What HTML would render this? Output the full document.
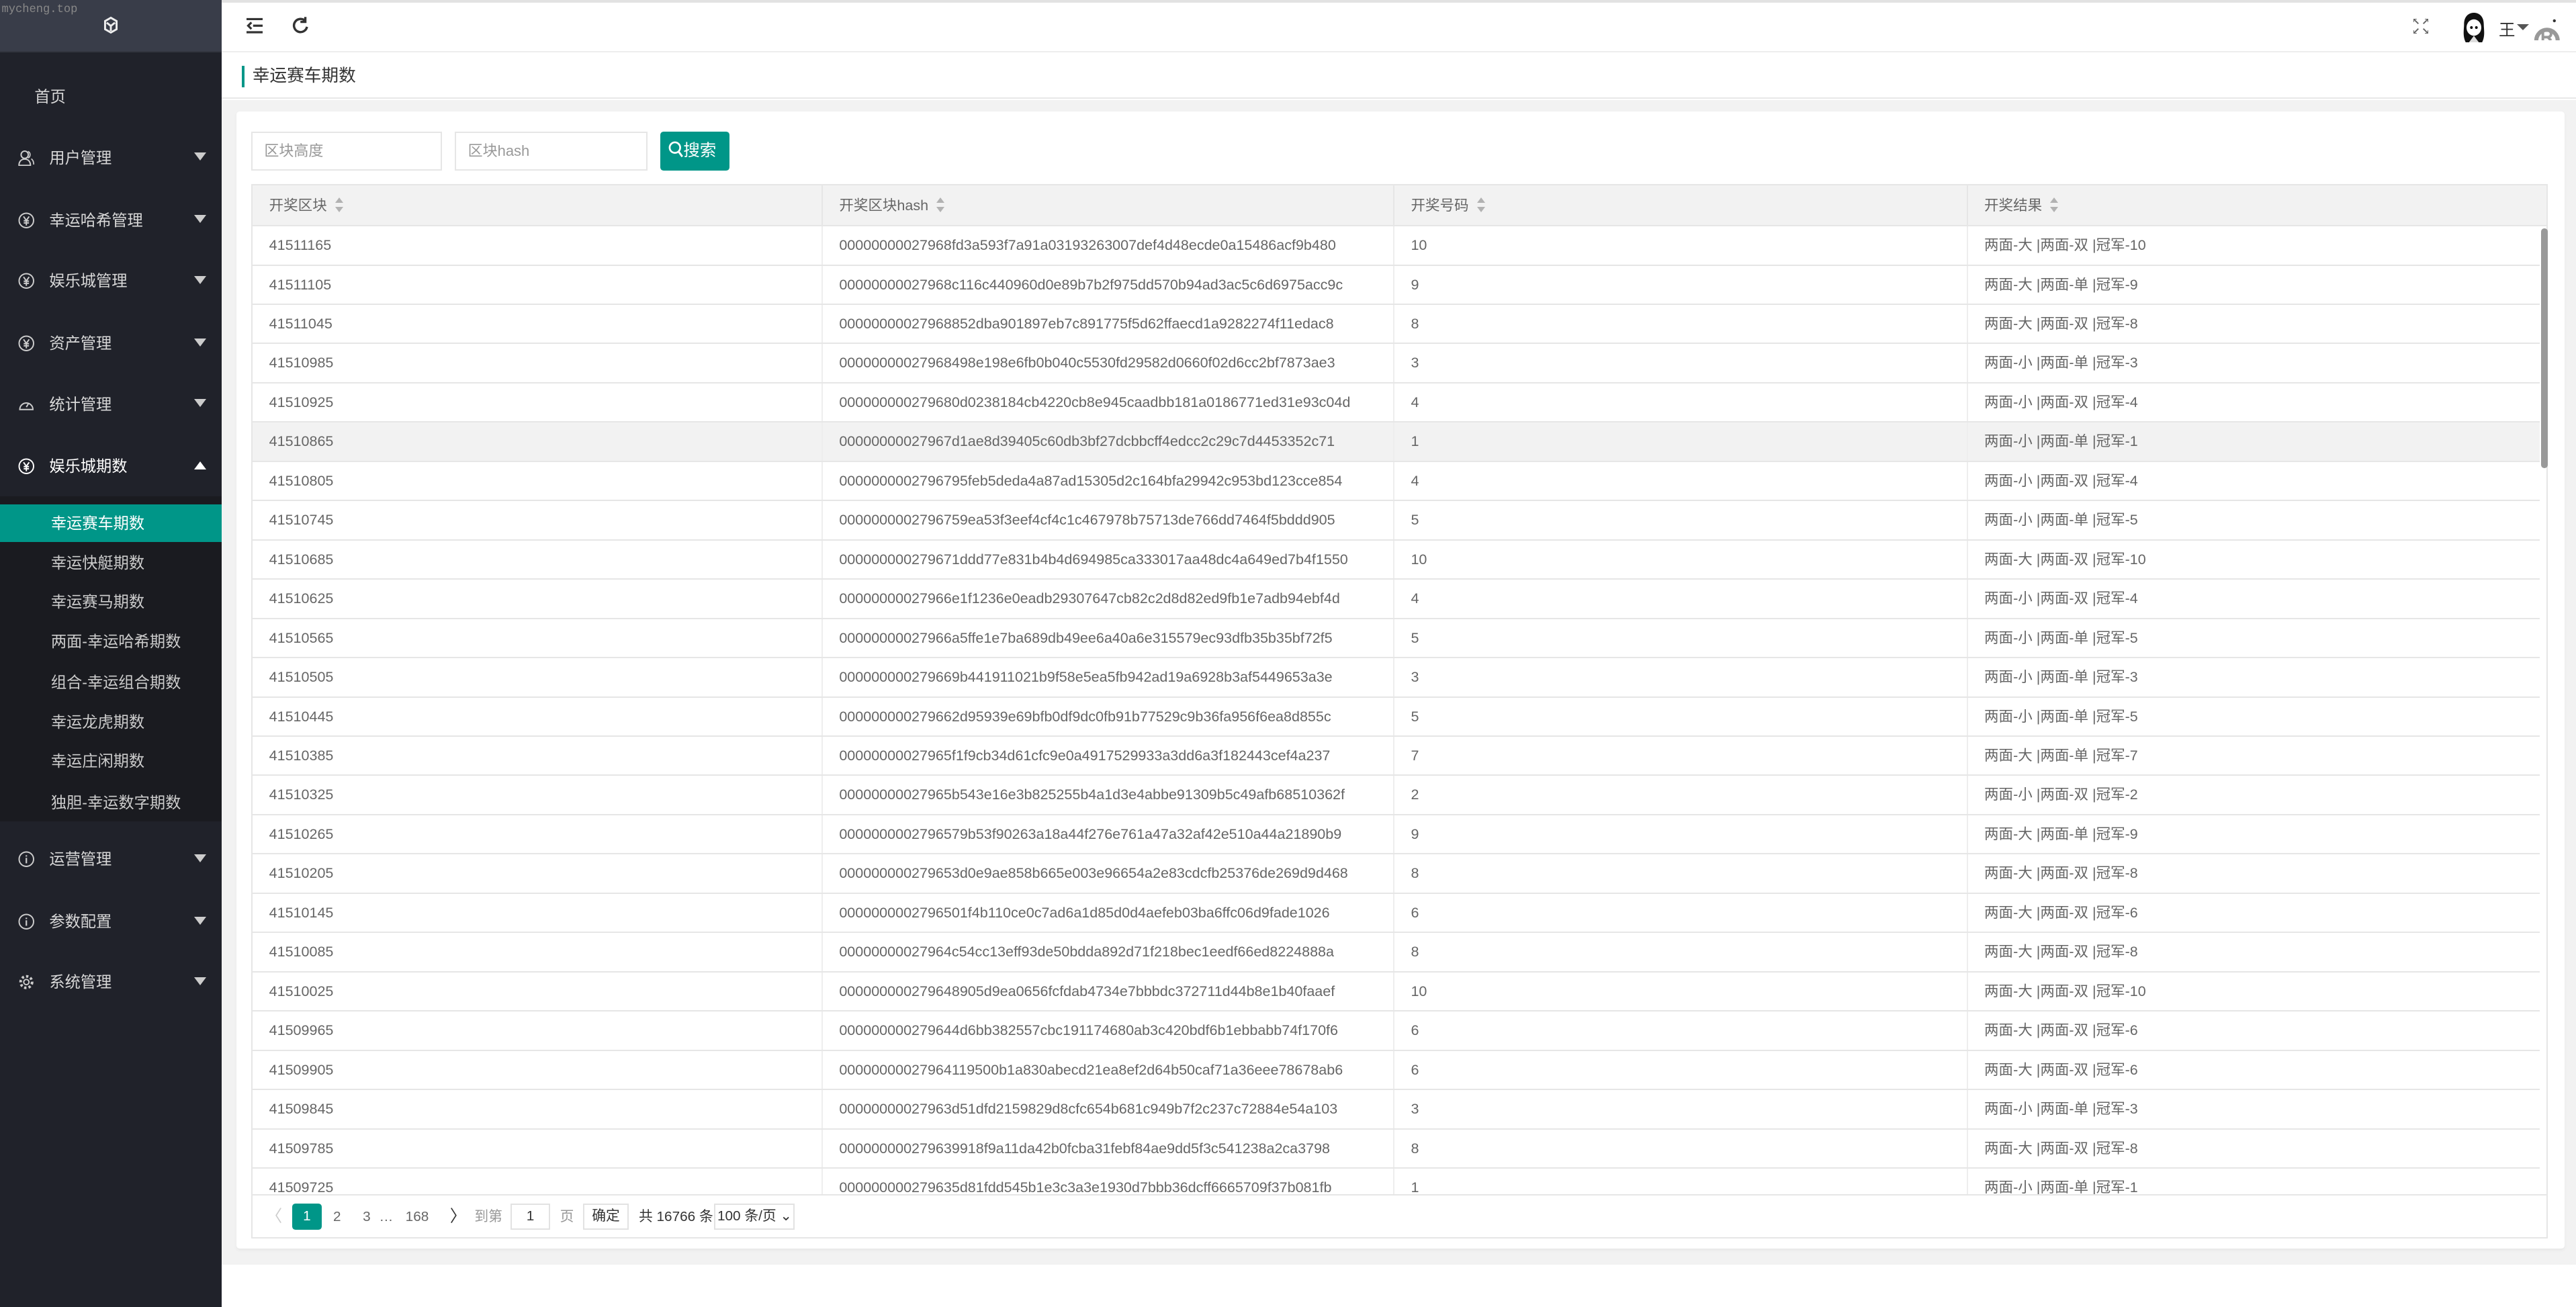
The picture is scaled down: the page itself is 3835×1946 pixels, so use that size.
<!DOCTYPE html>
<html><head><meta charset="utf-8"><style>
*{margin:0;padding:0;box-sizing:border-box}
html,body{width:3835px;height:1946px;overflow:hidden;background:#fff}
#w{zoom:2.44579;width:1568px;height:796px;position:relative;font-family:"Liberation Sans","Noto Sans CJK SC",sans-serif;color:#666;font-size:8.8px}
.sb{position:absolute;left:0;top:0;width:135px;height:796px;background:#20222a}
.logo{height:32px;background:#393d49;position:relative;border-bottom:1px solid #33363f}
.logo .wm{position:absolute;left:1px;top:2px;font-family:"Liberation Mono",monospace;font-size:7px;color:#888}
.mi{position:absolute;left:0;width:135px;color:#d8d8d8;font-size:9.5px;line-height:14px}
.mi svg{position:absolute;left:11px;top:2px}
.mi .t{position:absolute;left:30px}
.mi .ar{position:absolute;left:118px;top:4px;width:0;height:0;border-left:4px solid transparent;border-right:4px solid transparent;border-top:5px solid #ccc}
.mi .up{border-top:none;border-bottom:5px solid #fff}
.sub{position:absolute;left:0;top:302px;width:135px;height:198px;background:#1a1b20}
.si{position:absolute;left:0;width:135px;height:23px;line-height:23px;padding-left:31px;color:#ccc;font-size:9.5px}
.si.act{background:#009688;color:#fff}
.hd{position:absolute;left:135px;top:0;right:0;height:32px;background:#fff;border-top:2px solid #e2e2e2;border-bottom:1px solid #eee}
.tt{position:absolute;left:135px;top:32px;right:0;height:28px;background:#fff;border-bottom:1px solid #e8e8e8}
.tt span{position:absolute;left:12px;top:8px;padding-left:5px;border-left:2px solid #009688;font-size:10.5px;line-height:13px;color:#333}
.gbg{position:absolute;left:135px;top:61px;right:0;height:709px;background:#f2f2f2}
.card{position:absolute;left:144px;top:68px;width:1417px;height:692px;background:#fff;border-radius:2px;box-shadow:0 1px 2px rgba(0,0,0,.05)}
.inp{position:absolute;top:80px;height:24px;border:1px solid #e6e6e6;background:#fff;color:#999;line-height:22px;padding-left:7px;font-size:9px}
.btn{position:absolute;left:402px;top:80px;width:42px;height:24px;background:#009688;color:#fff;border-radius:2px;line-height:24px;font-size:10px;padding-left:5px}
.tbl{position:absolute;left:153px;top:112px;width:1398px;height:642px;border:1px solid #e6e6e6}
.th{position:absolute;left:0;top:0;width:1396px;height:25px;background:#f2f2f2;border-bottom:1px solid #e6e6e6}
.c{position:absolute;top:0;height:100%;padding-left:10px;white-space:nowrap}
.th .c{line-height:25px;border-right:1px solid #e6e6e6}
.srt{display:inline-block;vertical-align:middle;margin-left:5px;width:5px;height:9px;position:relative;top:-1px}
.srt:before{content:"";position:absolute;top:0;left:0;border-left:2.5px solid transparent;border-right:2.5px solid transparent;border-bottom:3.5px solid #b2b2b2}
.srt:after{content:"";position:absolute;bottom:0;left:0;border-left:2.5px solid transparent;border-right:2.5px solid transparent;border-top:3.5px solid #b2b2b2}
.body{position:absolute;left:0;top:25px;width:1396px;height:590px;overflow:hidden;border-bottom:1px solid #e6e6e6}
.r{position:absolute;left:0;width:1392px;height:23.9px;line-height:23px;border-bottom:1px solid #e6e6e6}
.r .c{border-right:1px solid #eee}
.r.h{background:#f2f2f2}
.sc{position:absolute;left:1393px;top:1px;width:4px;height:146px;background:#999;border-radius:2px}
.pg{position:absolute;left:0;top:616px;height:24px;width:100%;font-size:8.5px}
.pg span{position:absolute;top:5px;line-height:14px}
.box{border:1px solid #e2e2e2;background:#fff;text-align:center}
</style></head><body><div id="w">
<svg width="0" height="0" style="position:absolute"><defs>
<symbol id="yen" viewBox="0 0 10 10"><circle cx="5" cy="5" r="4.4" fill="none" stroke="currentColor" stroke-width=".8"/><path d="M3.3 2.6L5 5l1.7-2.4M5 5v3M3.4 5.2h3.2M3.4 6.5h3.2" fill="none" stroke="currentColor" stroke-width=".8"/></symbol>
<symbol id="inf" viewBox="0 0 10 10"><circle cx="5" cy="5" r="4.4" fill="none" stroke="currentColor" stroke-width=".8"/><path d="M5 4.2v3.3M5 2.6v.8" stroke="currentColor" stroke-width=".9"/></symbol>
</defs></svg>
<div class="sb">
 <div class="logo"><span class="wm">mycheng.top</span>
 <svg style="position:absolute;left:63px;top:10px" width="9" height="11" viewBox="0 0 9 11"><path d="M4.5 1L8 3v5L4.5 10 1 8V3z M2 4l2.5 2L7 4 M4.5 6v3" fill="none" stroke="#eee" stroke-width="1.2"/></svg></div>
 <div class="mi" style="top:52px"><span class="t" style="left:21px">首页</span></div>
 <div class="mi" style="top:89px"><svg width="10" height="10" viewBox="0 0 10 10" style="color:#ccc"><circle cx="4" cy="3" r="2.2" fill="none" stroke="#ccc" stroke-width=".8"/><path d="M0.5 9.5c0-2.5 1.5-3.8 3.5-3.8s3.5 1.3 3.5 3.8z" fill="none" stroke="#ccc" stroke-width=".8"/><path d="M6 1a2.2 2.2 0 0 1 0 4M8 5.5c1 .7 1.5 2 1.5 3.5" fill="none" stroke="#ccc" stroke-width=".7"/></svg><span class="t">用户管理</span><span class="ar"></span></div>
 <div class="mi" style="top:127px"><svg width="10" height="10" style="color:#ccc"><use href="#yen"/></svg><span class="t">幸运哈希管理</span><span class="ar"></span></div>
 <div class="mi" style="top:164px"><svg width="10" height="10" style="color:#ccc"><use href="#yen"/></svg><span class="t">娱乐城管理</span><span class="ar"></span></div>
 <div class="mi" style="top:202px"><svg width="10" height="10" style="color:#ccc"><use href="#yen"/></svg><span class="t">资产管理</span><span class="ar"></span></div>
 <div class="mi" style="top:239px"><svg width="10" height="10" viewBox="0 0 10 10"><path d="M1 8.5A4 4 0 1 1 9 8.5zM5 7l1.5-2.5" fill="none" stroke="#ccc" stroke-width=".8"/></svg><span class="t">统计管理</span><span class="ar"></span></div>
 <div class="mi" style="top:277px"><svg width="10" height="10" style="color:#fff"><use href="#yen"/></svg><span class="t" style="color:#fff">娱乐城期数</span><span class="ar up"></span></div>
 <div class="sub">
  <div class="si act" style="top:5px">幸运赛车期数</div>
  <div class="si" style="top:29px">幸运快艇期数</div>
  <div class="si" style="top:53px">幸运赛马期数</div>
  <div class="si" style="top:77px">两面-幸运哈希期数</div>
  <div class="si" style="top:102px">组合-幸运组合期数</div>
  <div class="si" style="top:126px">幸运龙虎期数</div>
  <div class="si" style="top:150px">幸运庄闲期数</div>
  <div class="si" style="top:175px">独胆-幸运数字期数</div>
 </div>
 <div class="mi" style="top:516px"><svg width="10" height="10" style="color:#ccc"><use href="#inf"/></svg><span class="t">运营管理</span><span class="ar"></span></div>
 <div class="mi" style="top:554px"><svg width="10" height="10" style="color:#ccc"><use href="#inf"/></svg><span class="t">参数配置</span><span class="ar"></span></div>
 <div class="mi" style="top:591px"><svg width="10" height="10" viewBox="0 0 10 10"><circle cx="5" cy="5" r="1.6" fill="none" stroke="#ccc" stroke-width=".8"/><circle cx="5" cy="5" r="3.5" fill="none" stroke="#ccc" stroke-width="1.6" stroke-dasharray="1.4 1.3"/></svg><span class="t">系统管理</span><span class="ar"></span></div>
</div>
<div class="hd">
 <svg style="position:absolute;left:15px;top:9px" width="10" height="10" viewBox="0 0 10 10"><path d="M0 1h10M4 5h6M0 9h10M3 3L1 5l2 2" fill="none" stroke="#333" stroke-width="1.3"/></svg>
 <svg style="position:absolute;left:43px;top:8px" width="10" height="11" viewBox="0 0 10 11"><path d="M8 3A4 4 0 1 0 9 6.5M8 0.5v3H5" fill="none" stroke="#333" stroke-width="1.4"/></svg>
 <svg style="position:absolute;left:1334px;top:10px" width="9" height="9" viewBox="0 0 9 9"><path d="M0 0l3 3M0 0h2M0 0v2M9 0L6 3M9 0H7M9 0v2M0 9l3-3M0 9h2M0 9V7M9 9L6 6M9 9H7M9 9V7" stroke="#666" stroke-width=".8" fill="none"/></svg>
 <svg style="position:absolute;left:1362px;top:6px" width="18" height="19" viewBox="0 0 18 19"><path d="M4 18C2 14 3 10 3 7 3 2 6 0 9 0s6 2 6 7c0 3 1 7-1 11z" fill="#111"/><ellipse cx="9" cy="9" rx="4.5" ry="5" fill="#fff"/><circle cx="7.5" cy="9" r=".8"/><circle cx="10.5" cy="9" r=".8"/><path d="M6 18l3-4 3 4z" fill="#ddd"/></svg>
 <span style="position:absolute;left:1386px;top:9px;font-size:10px;color:#333">王</span>
 <span style="position:absolute;left:1397px;top:13px;border-left:4px solid transparent;border-right:4px solid transparent;border-top:4px solid #555"></span>
 <svg style="position:absolute;left:1407px;top:9px" width="17" height="14" viewBox="0 0 17 14"><path d="M2 14A6.5 6.5 0 0 1 15 14" stroke="#999" stroke-width="2.5" fill="none"/><path d="M6 14V8h3a2 2 0 0 1 0 4H6M9 12l2 2" stroke="#999" stroke-width="1.6" fill="none"/><circle cx="13" cy="2" r=".9" fill="#333"/></svg>
</div>
<div class="tt"><span>幸运赛车期数</span></div>
<div class="gbg"></div>
<div class="card"></div>
<div class="inp" style="left:153px;width:116px">区块高度</div>
<div class="inp" style="left:277px;width:117px">区块hash</div>
<div class="btn"><svg width="9" height="10" viewBox="0 0 9 10" style="vertical-align:-1px"><circle cx="4" cy="4" r="3.2" stroke="#fff" stroke-width="1.1" fill="none"/><path d="M6.3 6.5L8.5 9.5" stroke="#fff" stroke-width="1.2"/></svg>搜索</div>
<div class="tbl">
 <div class="th">
  <div class="c" style="left:0;width:347px">开奖区块<i class="srt"></i></div>
  <div class="c" style="left:347px;width:348px">开奖区块hash<i class="srt"></i></div>
  <div class="c" style="left:695px;width:349px">开奖号码<i class="srt"></i></div>
  <div class="c" style="left:1044px;width:352px;border-right:none">开奖结果<i class="srt"></i></div>
 </div>
 <div class="body" id="bd"></div>
 <div class="sc" style="top:26px"></div>
 <div class="pg">
  <span style="left:8px;color:#ccc;font-size:10px">〈</span>
  <span class="box" style="left:24px;top:4px;width:18px;height:16px;background:#009688;color:#fff;border-color:#009688;line-height:14px;border-radius:2px">1</span>
  <span style="left:49px">2</span><span style="left:67px">3</span><span style="left:77px">…</span><span style="left:93px">168</span>
  <span style="left:120px;color:#333;font-size:10px">〉</span>
  <span style="left:135px;color:#999">到第</span>
  <span class="box" style="left:157px;top:4px;width:24px;height:16px;line-height:14px;color:#333">1</span>
  <span style="left:187px;color:#999">页</span>
  <span class="box" style="left:201px;top:4px;width:28px;height:16px;line-height:14px;color:#333">确定</span>
  <span style="left:235px;color:#333">共 16766 条</span>
  <span class="box" style="left:281px;top:4px;width:49px;height:16px;line-height:14px;color:#333">100 条/页 ⌄</span>
 </div>
</div>
<script>
var d=[["41511165","00000000027968fd3a593f7a91a03193263007def4d48ecde0a15486acf9b480","10","两面-大 |两面-双 |冠军-10"],
["41511105","00000000027968c116c440960d0e89b7b2f975dd570b94ad3ac5c6d6975acc9c","9","两面-大 |两面-单 |冠军-9"],
["41511045","00000000027968852dba901897eb7c891775f5d62ffaecd1a9282274f11edac8","8","两面-大 |两面-双 |冠军-8"],
["41510985","00000000027968498e198e6fb0b040c5530fd29582d0660f02d6cc2bf7873ae3","3","两面-小 |两面-单 |冠军-3"],
["41510925","000000000279680d0238184cb4220cb8e945caadbb181a0186771ed31e93c04d","4","两面-小 |两面-双 |冠军-4"],
["41510865","00000000027967d1ae8d39405c60db3bf27dcbbcff4edcc2c29c7d4453352c71","1","两面-小 |两面-单 |冠军-1"],
["41510805","0000000002796795feb5deda4a87ad15305d2c164bfa29942c953bd123cce854","4","两面-小 |两面-双 |冠军-4"],
["41510745","0000000002796759ea53f3eef4cf4c1c467978b75713de766dd7464f5bddd905","5","两面-小 |两面-单 |冠军-5"],
["41510685","000000000279671ddd77e831b4b4d694985ca333017aa48dc4a649ed7b4f1550","10","两面-大 |两面-双 |冠军-10"],
["41510625","00000000027966e1f1236e0eadb29307647cb82c2d8d82ed9fb1e7adb94ebf4d","4","两面-小 |两面-双 |冠军-4"],
["41510565","00000000027966a5ffe1e7ba689db49ee6a40a6e315579ec93dfb35b35bf72f5","5","两面-小 |两面-单 |冠军-5"],
["41510505","000000000279669b441911021b9f58e5ea5fb942ad19a6928b3af5449653a3e","3","两面-小 |两面-单 |冠军-3"],
["41510445","000000000279662d95939e69bfb0df9dc0fb91b77529c9b36fa956f6ea8d855c","5","两面-小 |两面-单 |冠军-5"],
["41510385","00000000027965f1f9cb34d61cfc9e0a4917529933a3dd6a3f182443cef4a237","7","两面-大 |两面-单 |冠军-7"],
["41510325","00000000027965b543e16e3b825255b4a1d3e4abbe91309b5c49afb68510362f","2","两面-小 |两面-双 |冠军-2"],
["41510265","0000000002796579b53f90263a18a44f276e761a47a32af42e510a44a21890b9","9","两面-大 |两面-单 |冠军-9"],
["41510205","000000000279653d0e9ae858b665e003e96654a2e83cdcfb25376de269d9d468","8","两面-大 |两面-双 |冠军-8"],
["41510145","0000000002796501f4b110ce0c7ad6a1d85d0d4aefeb03ba6ffc06d9fade1026","6","两面-大 |两面-双 |冠军-6"],
["41510085","00000000027964c54cc13eff93de50bdda892d71f218bec1eedf66ed8224888a","8","两面-大 |两面-双 |冠军-8"],
["41510025","000000000279648905d9ea0656fcfdab4734e7bbbdc372711d44b8e1b40faaef","10","两面-大 |两面-双 |冠军-10"],
["41509965","000000000279644d6bb382557cbc191174680ab3c420bdf6b1ebbabb74f170f6","6","两面-大 |两面-双 |冠军-6"],
["41509905","00000000027964119500b1a830abecd21ea8ef2d64b50caf71a36eee78678ab6","6","两面-大 |两面-双 |冠军-6"],
["41509845","00000000027963d51dfd2159829d8cfc654b681c949b7f2c237c72884e54a103","3","两面-小 |两面-单 |冠军-3"],
["41509785","000000000279639918f9a11da42b0fcba31febf84ae9dd5f3c541238a2ca3798","8","两面-大 |两面-双 |冠军-8"],
["41509725","000000000279635d81fdd545b1e3c3a3e1930d7bbb36dcff6665709f37b081fb","1","两面-小 |两面-单 |冠军-1"]];
var h="";d.forEach(function(r,i){h+='<div class="r'+(i==5?' h':'')+'" style="top:'+(i*23.9).toFixed(2)+'px"><div class="c" style="left:0;width:347px">'+r[0]+'</div><div class="c" style="left:347px;width:348px">'+r[1]+'</div><div class="c" style="left:695px;width:349px">'+r[2]+'</div><div class="c" style="left:1044px;width:348px;border-right:none">'+r[3]+'</div></div>';});
document.getElementById("bd").innerHTML=h;
</script>
</div></body></html>
